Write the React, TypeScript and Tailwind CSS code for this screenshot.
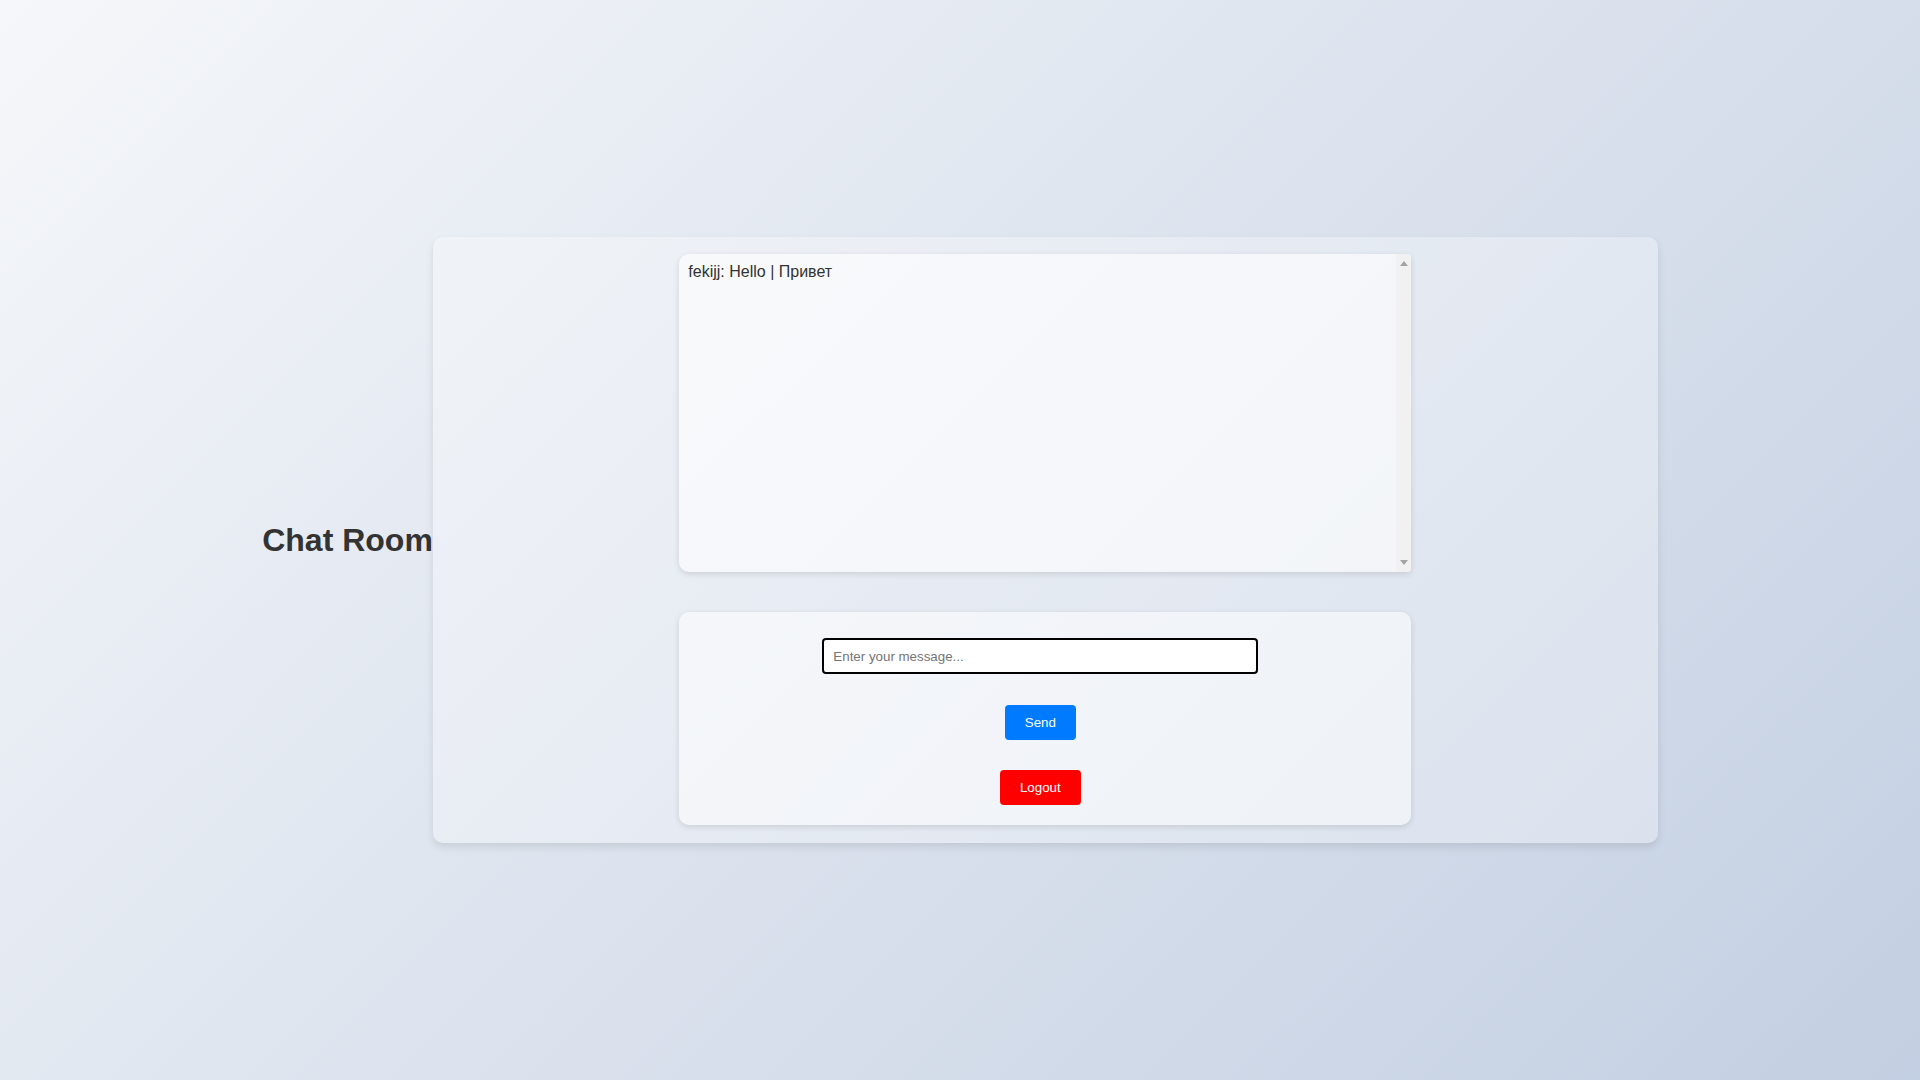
import { useState } from "react";

const messages = [{ user: "fekijj", text: "Hello | Привет" }];

// classic scrollbar look, drawn since headless overlay bars don't show
const ScrollTrack = () => (
  <div className="flex w-[15px] shrink-0 flex-col items-center justify-between bg-[#f1f1f1] py-[7px]">
    <svg width="8" height="5" viewBox="0 0 8 5">
      <path d="M4 0 L8 5 L0 5 Z" fill="#a3a3a3" />
    </svg>
    <svg width="8" height="5" viewBox="0 0 8 5">
      <path d="M0 0 L8 0 L4 5 Z" fill="#a3a3a3" />
    </svg>
  </div>
);

const App = () => {
  const [draft, setDraft] = useState("");

  return (
    <div
      className="flex h-screen w-full items-center justify-center bg-[linear-gradient(135deg,#f5f7fa_0%,#c3cfe2_100%)] text-[#333]"
      style={{ fontFamily: '"Liberation Sans", Arial, sans-serif' }}
    >
      <h1 className="text-[32px] font-bold leading-[37px]">Chat Room</h1>

      {/* main panel */}
      <div className="flex h-[606px] w-[1225px] flex-col items-center rounded-[10px] bg-white/30 pt-[17px] shadow-[0_4px_8px_rgba(0,0,0,0.1)]">
        <div className="flex h-[318px] w-[732px] overflow-hidden rounded-l-[10px] rounded-r-[4px] bg-white/60 shadow-[0_2px_6px_rgba(0,0,0,0.12)]">
          <div className="flex-1 pl-[9px] pt-[9px] text-base leading-[18px]">
            {messages.map((m, i) => (
              <div key={i}>
                {m.user}: {m.text}
              </div>
            ))}
          </div>
          <ScrollTrack />
        </div>

        {/* form */}
        <div className="mt-[40px] flex h-[213px] w-[732px] flex-col items-center rounded-[10px] bg-white/50 pr-[10px] pt-[26px] shadow-[0_2px_6px_rgba(0,0,0,0.12)]">
          <input
            autoFocus
            value={draft}
            onChange={(e) => setDraft(e.target.value)}
            placeholder="Enter your message..."
            className="h-[36px] w-[436px] rounded-[4px] border-2 border-black bg-white px-[9px] text-[13.33px] text-black outline-none placeholder:text-[#757575]"
          />
          <button className="mt-[31px] h-[35px] rounded-[4px] bg-[#007bff] px-5 text-[13.33px] text-white">
            Send
          </button>
          <button className="mt-[30px] h-[35px] rounded-[4px] bg-[#ff0000] px-5 text-[13.33px] text-white">
            Logout
          </button>
        </div>
      </div>
    </div>
  );
};

export default App;
